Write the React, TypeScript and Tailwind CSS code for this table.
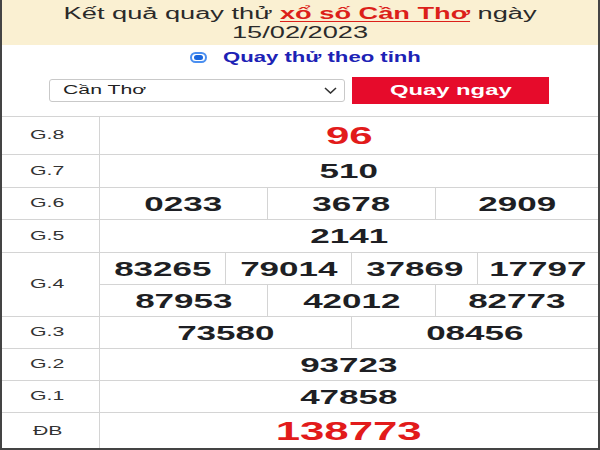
import React from 'react';

type Row = { label: string; cols: string; nums: string[]; red?: boolean; size?: string; h: string };

const Wide: React.FC<{ children: React.ReactNode; className?: string }> = ({ children, className = '' }) => (
    <span className={`inline-block whitespace-nowrap scale-x-[1.7] ${className}`}>{children}</span>
);

const Num: React.FC<{ value: string; red?: boolean; size?: string }> = ({ value, red, size }) => (
    <span
        className={`inline-block whitespace-nowrap scale-x-[1.75] font-bold leading-none ${size ?? 'text-[20px]'} ${red ? 'text-[#e21b1b]' : 'text-[#1e1f24]'}`}
    >
        {value}
    </span>
);

const rows: Row[] = [
    { label: 'G.8', cols: 'grid-cols-1', nums: ['96'], red: true, size: 'text-[24px]', h: 'h-[38px]' },
    { label: 'G.7', cols: 'grid-cols-1', nums: ['510'], h: 'h-[33px]' },
    { label: 'G.6', cols: 'grid-cols-[168px_168px_1fr]', nums: ['0233', '3678', '2909'], h: 'h-[32px]' },
    { label: 'G.5', cols: 'grid-cols-1', nums: ['2141'], h: 'h-[33px]' },
];

const rowsAfter: Row[] = [
    { label: 'G.3', cols: 'grid-cols-[252px_1fr]', nums: ['73580', '08456'], h: 'h-[32px]' },
    { label: 'G.2', cols: 'grid-cols-1', nums: ['93723'], h: 'h-[32px]' },
    { label: 'G.1', cols: 'grid-cols-1', nums: ['47858'], h: 'h-[32px]' },
];

const NumCells: React.FC<{ cols: string; nums: string[]; red?: boolean; size?: string }> = ({ cols, nums, red, size }) => (
    <div className={`grid ${cols} h-full`}>
        {nums.map((n, i) => (
            <div
                key={n}
                className={`flex items-center justify-center ${i < nums.length - 1 ? 'border-r border-[#d4d4d4]' : ''}`}
            >
                <Num value={n} red={red} size={size} />
            </div>
        ))}
    </div>
);

const Label: React.FC<{ text: string }> = ({ text }) => (
    <div className="w-[98px] shrink-0 border-r border-[#d4d4d4] flex items-center justify-center pr-[6px]">
        <Wide className="text-[12.5px] text-[#333]">{text}</Wide>
    </div>
);

const PrizeRow: React.FC<{ row: Row }> = ({ row }) => (
    <div className={`flex ${row.h} border-b border-[#d4d4d4]`}>
        <Label text={row.label} />
        <div className="flex-1">
            <NumCells cols={row.cols} nums={row.nums} red={row.red} size={row.size} />
        </div>
    </div>
);

export default function App() {
    return (
        <div className="w-[600px] h-[450px] bg-white border-x-2 border-b-2 border-[#444] overflow-hidden font-['Liberation_Sans',Arial,sans-serif]">
            {/* Title */}
            <div className="h-[45px] bg-[#faf0d2] pt-[4px] flex flex-col items-center text-[16px] leading-[19px] text-[#2a2a2a]">
                <Wide>
                    Kết quả quay thử{' '}
                    <span className="font-bold text-[#dc1f1a] underline underline-offset-2">xổ số Cần Thơ</span> ngày
                </Wide>
                <Wide>15/02/2023</Wide>
            </div>

            {/* Radio */}
            <div className="h-[24px] flex items-center pl-[188px] gap-[16px]">
                <div className="w-[17px] h-[11px] rounded-full border-2 border-[#4b8ff0] flex items-center justify-center">
                    <div className="w-[9px] h-[5px] rounded-full bg-[#1a66dd]" />
                </div>
                <span className="inline-block whitespace-nowrap origin-left scale-x-[1.58] text-[14px] font-bold text-[#1c22b5]">
                    Quay thử theo tỉnh
                </span>
            </div>

            {/* Controls */}
            <div className="mt-[8px] h-[27px] flex items-center pl-[47px] gap-[7px]">
                <div className="w-[296px] h-[23px] border border-[#c9c9c9] rounded-[3px] bg-white flex items-center justify-between pl-[13px] pr-[7px]">
                    <Wide className="origin-left text-[12.5px] text-[#222]">Cần Thơ</Wide>
                    <svg width="13" height="7" viewBox="0 0 13 7" fill="none">
                        <path d="M1 1l5.5 5L12 1" stroke="#333" strokeWidth="1.6" />
                    </svg>
                </div>
                <div className="w-[197px] h-[27px] bg-[#e60b2b] flex items-center justify-center">
                    <Wide className="text-[14px] font-bold text-white">Quay ngay</Wide>
                </div>
            </div>

            {/* Results */}
            <div className="mt-[12px] border-t border-[#d4d4d4]">
                {rows.map(r => (
                    <PrizeRow key={r.label} row={r} />
                ))}

                <div className="flex h-[64px] border-b border-[#d4d4d4]">
                    <Label text="G.4" />
                    <div className="flex-1 flex flex-col">
                        <div className="h-[32px] border-b border-[#d4d4d4]">
                            <NumCells cols="grid-cols-[126px_126px_126px_1fr]" nums={['83265', '79014', '37869', '17797']} />
                        </div>
                        <div className="flex-1">
                            <NumCells cols="grid-cols-[168px_168px_1fr]" nums={['87953', '42012', '82773']} />
                        </div>
                    </div>
                </div>

                {rowsAfter.map(r => (
                    <PrizeRow key={r.label} row={r} />
                ))}

                <div className="flex h-[36px]">
                    <Label text="ĐB" />
                    <div className="flex-1 flex items-center justify-center">
                        <Num value="138773" red size="text-[25px]" />
                    </div>
                </div>
            </div>
        </div>
    );
}
